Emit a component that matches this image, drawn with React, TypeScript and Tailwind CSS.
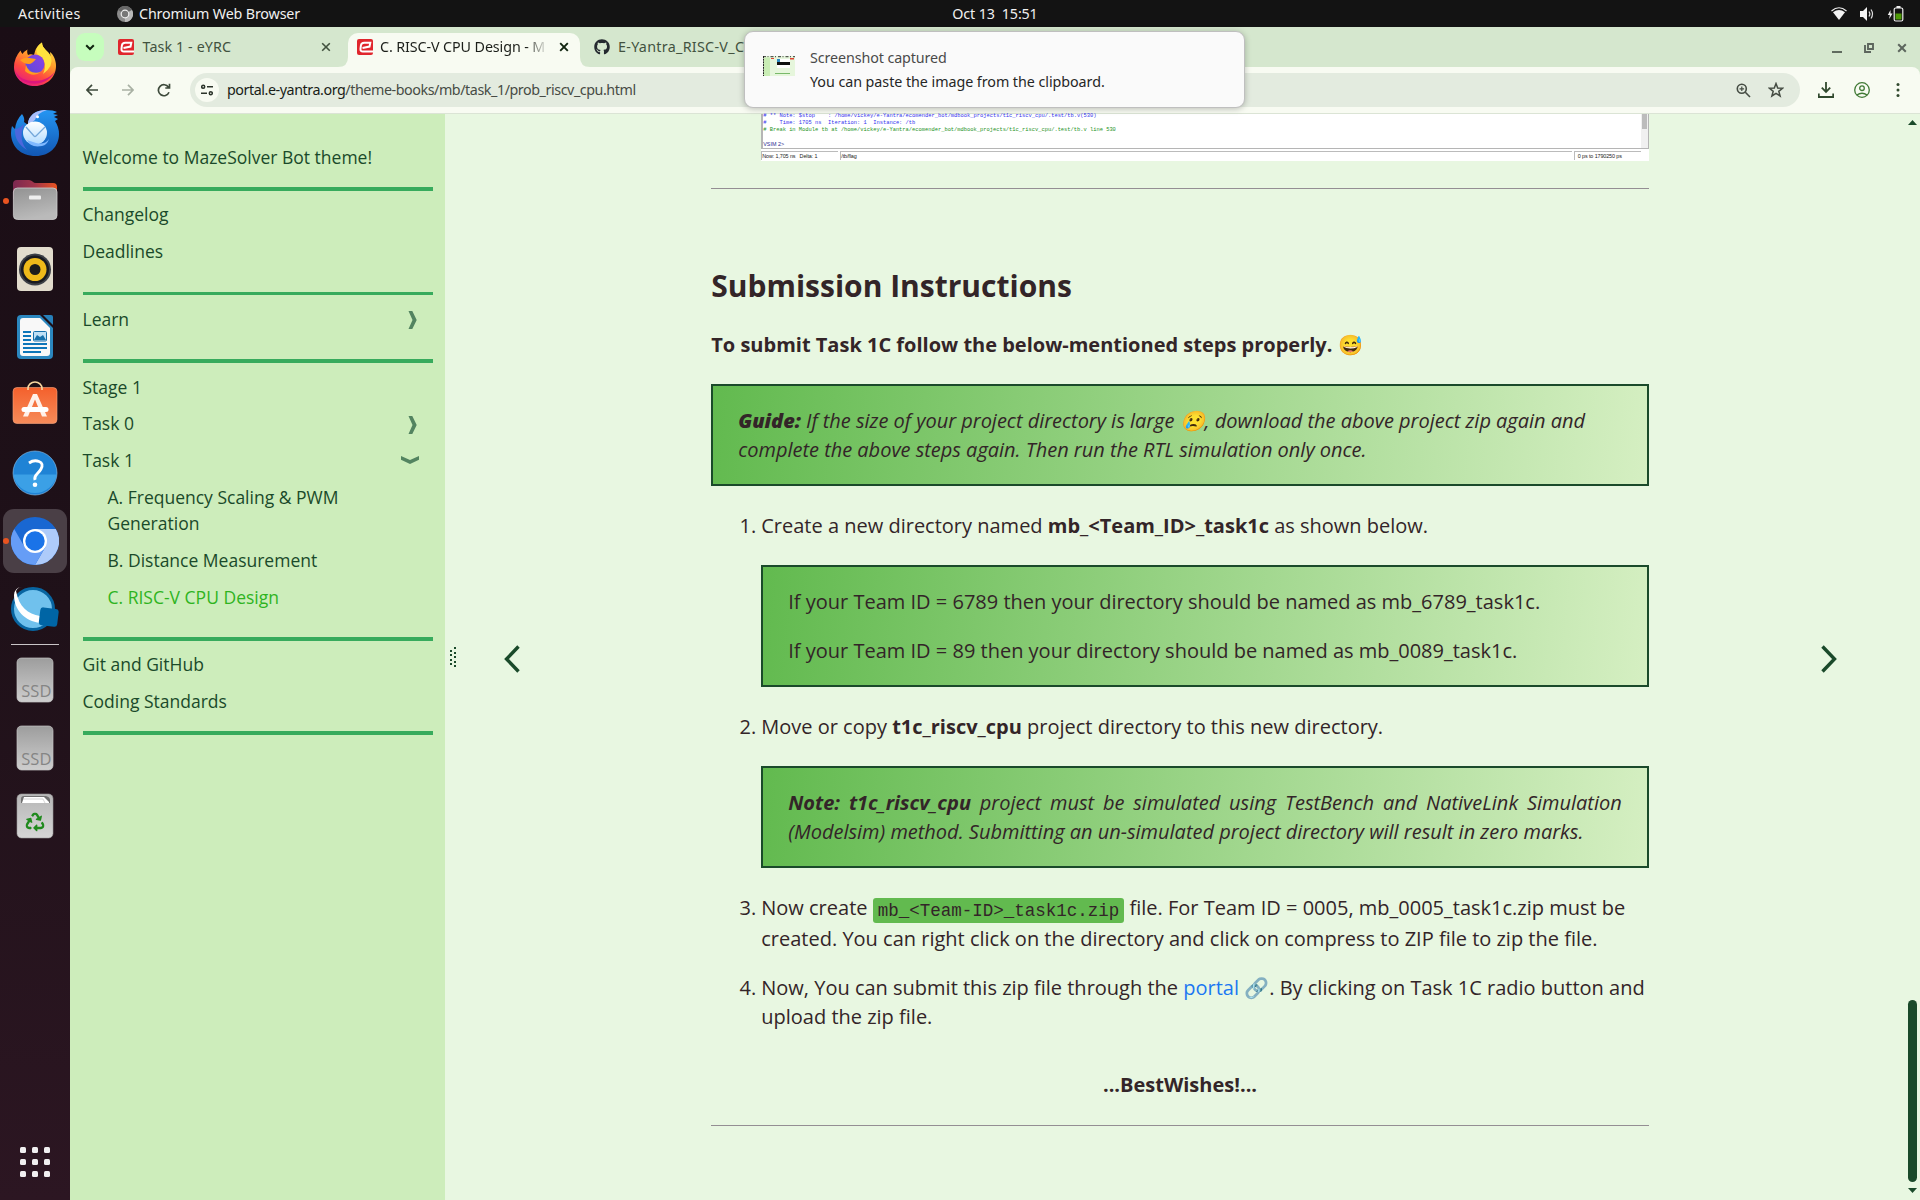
import React from "react";
import { FaGithub, FaRecycle } from "react-icons/fa";

const UI = "font-['Noto_Sans',sans-serif]";

function TopBar() {
  return (
    <header className={`grid h-[27px] w-full grid-cols-[1fr_auto_1fr] items-center bg-[#131313] text-[14.3px] leading-[27px] text-[#f0f0f0] ${UI}`}>
      <div className="flex items-center pl-[18px]">
        <span className="w-[99px] tracking-[0.3px]">Activities</span>
        <svg className="mr-[6px] h-4 w-4" viewBox="0 0 16 16">
          <circle cx="8" cy="8" r="8" fill="#8b8b8b" />
          <path d="M8 8L1 4A8 8 0 0 1 15 4Z" fill="#666" />
          <path d="M8 8L15 4A8 8 0 0 1 8 16Z" fill="#b8b8b8" />
          <circle cx="8" cy="8" r="4.4" fill="#eee" />
          <circle cx="8" cy="8" r="3.2" fill="#777" />
        </svg>
        <span className="tracking-[-0.15px]">Chromium Web Browser</span>
      </div>
      <div className="pl-[70px] whitespace-pre tracking-[-0.15px]">Oct 13  15:51</div>
      <div className="flex items-center justify-end pr-[16px]">
        <svg className="mr-[12px] h-[16px] w-[16px]" viewBox="0 0 16 16">
          <path d="M.5 5Q8 -1.5 15.500 5" fill="none" stroke="#eee" strokeWidth="1.200" />
          <path d="M2 6.200Q8 1.600 14 6.200L8 14Z" fill="#f2f2f2" />
        </svg>
        <svg className="mr-[12px] h-[16px] w-[16px]" viewBox="0 0 16 16">
          <path d="M1 5h3l4-4v14l-4-4H1z" fill="#f2f2f2" />
          <path d="M10 5.500q1.800 2.500 0 5M12 3.500q3 4.500 0 9" fill="none" stroke="#ddd" strokeWidth="1.200" />
        </svg>
        <svg className="h-[16px] w-[17px]" viewBox="0 0 17 16">
          <path d="M3.500 4L.8 9h2l-.6 4L5.500 7.500h-2z" fill="#f2f2f2" />
          <rect x="7.200" y="2" width="8.600" height="13" rx="1.500" fill="#131313" stroke="#eee" strokeWidth="1.200" />
          <rect x="9.500" y="0" width="4" height="2" fill="#eee" />
          <rect x="8.500" y="7.500" width="6" height="6" fill="#4e9a06" />
        </svg>
      </div>
    </header>
  );
}

function DockItem({ children, active, dot }: { children: React.ReactNode; active?: boolean; dot?: boolean }) {
  return (
    <div className="relative flex h-[68px] w-[70px] items-center justify-center">
      {active && <div className="absolute inset-x-[3px] inset-y-[2px] rounded-[11px] bg-[#4a3f46]" />}
      {dot && <div className="absolute top-[31px] left-[3px] h-[6px] w-[6px] rounded-full bg-[#e95420]" />}
      <svg className="relative h-12 w-12" viewBox="0 0 48 48">{children}</svg>
    </div>
  );
}

function Disk() {
  return (
    <>
      <rect x="6" y="2" width="36" height="44" rx="4.500" fill="url(#disk)" stroke="#c4c4c4" strokeWidth=".7" />
      <text x="10.300" y="40.800" fontSize="16.500" fill="#858585" fontFamily="Open Sans, sans-serif">SSD</text>
    </>
  );
}

function Dock() {
  return (
    <nav className="flex w-[70px] shrink-0 flex-col bg-gradient-to-b from-[#1a0d15] via-[#1f1119] to-[#2c1622] pt-[4px]">
      <DockItem>
        <defs>
          <linearGradient id="ff" x1="0.800" y1="0" x2="0.300" y2="1"><stop offset="0" stopColor="#fff14a" /><stop offset=".4" stopColor="#ff9a2a" /><stop offset=".7" stopColor="#ff4a40" /><stop offset="1" stopColor="#e51c80" /></linearGradient>
          <linearGradient id="ffc" x1="0" y1="1" x2="1" y2="0"><stop offset="0" stopColor="#5a4ad8" /><stop offset="1" stopColor="#8d40e6" /></linearGradient>
          <linearGradient id="tb" x1="0.500" y1="0" x2="0.500" y2="1"><stop offset="0" stopColor="#2496f3" /><stop offset="1" stopColor="#1257b4" /></linearGradient>
          <linearGradient id="env" x1="0" y1="0" x2="0" y2="1"><stop offset="0" stopColor="#fff" /><stop offset="1" stopColor="#b3dcff" /></linearGradient>
          <linearGradient id="fold" x1="0" y1="0" x2="1" y2="0"><stop offset="0" stopColor="#7b2850" /><stop offset=".5" stopColor="#a2354b" /><stop offset="1" stopColor="#e95420" /></linearGradient>
          <linearGradient id="foldf" x1="0" y1="0" x2="0.300" y2="1"><stop offset="0" stopColor="#929292" /><stop offset="1" stopColor="#bababa" /></linearGradient>
          <linearGradient id="disk" x1="0" y1="0" x2="0" y2="1"><stop offset="0" stopColor="#9d9d9d" /><stop offset="1" stopColor="#cecece" /></linearGradient>
          <linearGradient id="trash" x1="0" y1="0" x2="0" y2="1"><stop offset="0" stopColor="#b6b6b6" /><stop offset="1" stopColor="#d6d6d6" /></linearGradient>
          <linearGradient id="bag" x1="0" y1="0" x2="0" y2="1"><stop offset="0" stopColor="#f4602c" /><stop offset="1" stopColor="#f68c5a" /></linearGradient>
        </defs>
        <path d="M31 1.500C24 6 24 11 23 14C20 13 19 13 17 14C16 12 16 10 16.500 8.500Q13 10.500 11.500 13Q10 11 9.500 9.500Q3 17 3 26C3 37 12 45 24 45C36 45 45 36 45 25C45 20 43 14 39 11Q39 14 40 16C38 10 31 8 31 1.500Z" fill="url(#ff)" />
        <path d="M31 1.500C24 6 25 11 27 14C34 17 36 25 32 33Q43 25 40 16C38 10 31 8 31 1.500Z" fill="#ffe23e" />
        <circle cx="24" cy="23" r="9.500" fill="url(#ffc)" />
        <path d="M9 19Q14 16 18 17L25 18Q21 23 18 23Q13 23 9 19ZM15 24Q18 34 30 31Q22 37 14 30Z" fill="#ff9d1e" />
        <path d="M4 29C7 47 40 48 45 27C42 42 10 46 4 29Z" fill="#dc177c" />
      </DockItem>
      <DockItem>
        <path d="M17 16C17 5 27 1 34 1Q43 1 46 3L42 5L47 6L43 8L47 10L44 12Q48 18 48 25C48 38 38 47 25 47C9 47 0 37 0 24Q0 20 1 17L4 20Q5 11 11 5Q14 9 13 13L17 16Z" fill="url(#tb)" />
        <path d="M17 13C20 3 28 1 36 1Q26 4 24 11L17 16Z" fill="#a9bdfa" />
        <path d="M4 20Q3 33 16 41Q7 31 13 15Q8 20 4 20Z" fill="#4b67dc" />
        <ellipse cx="24" cy="24" rx="12" ry="11.500" fill="url(#env)" />
        <path d="M15 18L23 27Q24 28 25 27L34 18" fill="none" stroke="#74a7da" strokeWidth="1.300" />
        <path d="M16 31Q19 39 31 37Q36 36 38 30Q34 36 25 34Z" fill="#80b9ff" />
        <circle cx="26.500" cy="7.800" r="1.500" fill="#fff" />
      </DockItem>
      <DockItem dot>
        <path d="M2 10V7q0-4 4-4h12q2 0 3.500 1.500t3.500 1.500h17q4 0 4 4v12H2z" fill="url(#fold)" />
        <rect x="2.400" y="11" width="43.600" height="31.500" rx="4" fill="url(#foldf)" stroke="#cfcfcf" strokeWidth=".8" />
        <rect x="18" y="18.500" width="12" height="4" rx="1" fill="#eee" />
      </DockItem>
      <DockItem>
        <rect x="6" y="2" width="36" height="44" rx="4" fill="#e2dccd" />
        <circle cx="24" cy="24.500" r="16" fill="#3d4047" />
        <circle cx="24" cy="24.500" r="14" fill="#191a20" />
        <circle cx="24" cy="24.500" r="11.500" fill="#eeb91a" />
        <circle cx="24" cy="24.500" r="5.500" fill="#1c1c1c" />
      </DockItem>
      <DockItem>
        <path d="M10 2h19l13 13v27q0 4-4 4H10q-4 0-4-4V6q0-4 4-4z" fill="#2b87bf" />
        <path d="M12 5h17l10 10v25q0 3-3 3H12q-3 0-3-3V8q0-3 3-3z" fill="#f8f8f8" />
        <path d="M32 2h8q2 0 2 2v8z" fill="#2680ba" />
        <path d="M12 19h8M12 23h8M12 27h8M12 31h24M12 35h24M12 39h18" stroke="#0e76b9" strokeWidth="1.800" />
        <rect x="22.500" y="18.500" width="13" height="9.500" rx="1" fill="#bfe0f6" stroke="#1670ab" />
        <path d="M23 27l3-5 3 2 3-2 3 5z" fill="#1670ab" />
      </DockItem>
      <DockItem>
        <rect x="2" y="6.500" width="44" height="36" rx="4" fill="url(#bag)" stroke="#f9a47c" strokeWidth=".6" />
        <path d="M17 9V7.500a7 6.500 0 0 1 14 0V9" fill="none" stroke="#f9d7a0" strokeWidth="1.600" />
        <path d="M22 13h4l10 22.500h-5L24 18.500L17 35.500h-5z" fill="#fff1ea" />
        <rect x="10.500" y="26" width="27" height="5" rx="2.500" fill="#fff" />
      </DockItem>
      <DockItem>
        <circle cx="24" cy="24" r="22" fill="#1f83d5" stroke="#8ec6f2" strokeWidth=".6" />
        <path d="M2.300 25.500h43.400a22 22 0 0 1-43.400 0z" fill="#3ba0e6" />
        <path d="M18 14Q23 10.500 28 12.500T30 20Q29 22 26 25T24 31" fill="none" stroke="#fff" strokeWidth="2.800" />
        <circle cx="24" cy="35.800" r="2.300" fill="#fff" />
      </DockItem>
      <DockItem active dot>
        <circle cx="24" cy="24" r="24" fill="#1967d2" />
        <path d="M24 12H44.800A24 24 0 0 1 24 48L34.400 30Z" fill="#aecbfa" />
        <path d="M3.200 12L13.600 30L24 36L34.400 30L24 48A24 24 0 0 1 3.200 12Z" fill="#669df6" />
        <circle cx="24" cy="24" r="12" fill="#fff" />
        <circle cx="24" cy="24" r="9.700" fill="#1a73e8" />
      </DockItem>
      <DockItem>
        <circle cx="22" cy="24" r="20.500" fill="#70c1ed" stroke="#0865a1" strokeWidth="3" />
        <path d="M5 6C8 22 17 29 29 31V38C14 36 3 25 3 10Q4 2 11 2Q7 2 5 6Z" fill="#fff" />
        <rect x="28.500" y="23" width="18.500" height="18" rx="3" fill="#0065a5" transform="rotate(7 37 32)" />
      </DockItem>
      <div className="mx-auto my-px h-px w-12 bg-[#c9c5c7]" />
      <DockItem><Disk /></DockItem>
      <DockItem><Disk /></DockItem>
      <DockItem>
        <rect x="6" y="2" width="36" height="44" rx="4.500" fill="url(#trash)" stroke="#9a9a9a" strokeWidth=".6" />
        <path d="M10 11V7q0-3 3-3h22q4 1 4 4v3z" fill="#717171" />
        <path d="M11 11l2-6h20l5 5v1z" fill="#fff" />
        <path d="M12 7l20 0 2 4" stroke="#bbb" fill="none" strokeWidth=".6" />
        <g transform="translate(14.500 20.500)"><FaRecycle size={19} color="#208a1e" /></g>
      </DockItem>
      <div className="mt-auto mb-[23px] grid grid-cols-3 gap-[6px] self-center">
        {Array.from({ length: 9 }, (_, i) => <div key={i} className="h-[6px] w-[6px] rounded-[1.500px] bg-[#f1eff0]" />)}
      </div>
    </nav>
  );
}

function Favicon() {
  return (
    <svg className="h-4 w-4 shrink-0" viewBox="0 0 16 16">
      <rect width="16" height="16" rx="2" fill="#e0262d" />
      <path d="M16 12.600H6Q3.200 12.600 3.500 9.800L3.900 6.500Q4.300 3.700 7.200 3.700H13.300L12.500 7.600L5.500 9" fill="none" stroke="#fff" strokeWidth="2" />
    </svg>
  );
}

function Cross({ color, width = "1.600" }: { color: string; width?: string }) {
  return (
    <svg className="h-[10px] w-[10px] shrink-0" viewBox="0 0 10 10">
      <path d="M1.200 1.200l7.600 7.600M8.800 1.200L1.200 8.800" stroke={color} strokeWidth={width} />
    </svg>
  );
}

function TabStrip() {
  return (
    <div className={`flex h-[40px] items-end bg-[#d5e7ce] pl-[6px] text-[14.3px] text-[#42523f] ${UI}`}>
      <div className="mb-[6px] flex h-7 w-7 items-center justify-center rounded-[9px] bg-[#c6fdbd]">
        <svg className="h-[10px] w-[10px]" viewBox="0 0 10 10"><path d="M1.200 3.200L5 7l3.800-3.800" fill="none" stroke="#10240f" strokeWidth="2" /></svg>
      </div>
      <div className="flex h-[34px] w-[244px] items-center pb-[6px] pl-[14px]">
        <Favicon />
        <span className="ml-[8.500px] flex-1 tracking-[0.1px]">Task 1 - eYRC</span>
        <span className="mr-[17px]"><Cross color="#42523f" /></span>
      </div>
      <div className="relative flex h-[34px] w-[232px] items-center rounded-t-[10px] bg-[#f8fbf2] pb-[6px] pl-[9px] text-[#1c1f1a]">
        <svg className="absolute bottom-0 left-[-10px] h-[10px] w-[10px]" viewBox="0 0 10 10"><path d="M0 10Q10 10 10 0V10Z" fill="#f8fbf2" /></svg>
        <svg className="absolute right-[-10px] bottom-0 h-[10px] w-[10px]" viewBox="0 0 10 10"><path d="M10 10Q0 10 0 0V10Z" fill="#f8fbf2" /></svg>
        <Favicon />
        <span className="ml-[7px] w-[168px] overflow-hidden tracking-[-0.1px] whitespace-nowrap [mask-image:linear-gradient(to_right,black_146px,transparent_168px)]">C. RISC-V CPU Design - M</span>
        <span className="ml-[11px] flex"><Cross color="#10240f" width="1.900" /></span>
      </div>
      <div className="flex h-[34px] items-center pb-[6px] pl-[14px]">
        <FaGithub size={16} color="#24292f" />
        <span className="ml-[8px] tracking-[0.3px] whitespace-nowrap">E-Yantra_RISC-V_C</span>
      </div>
      <div className="mb-[14px] ml-auto flex items-end pr-[13px]">
        <div className="mr-[22px] h-[2px] w-[10px] bg-[#606b5f]" />
        <svg className="mr-[23px] h-[10px] w-[10px]" viewBox="0 0 10 10"><path d="M4 1h5v5H4zM1 2v7h6" fill="none" stroke="#5d665e" strokeWidth="1.900" /></svg>
        <Cross color="#5d665e" width="2" />
      </div>
    </div>
  );
}

function Toolbar() {
  return (
    <div className="bg-[#d5e7ce]">
      <div className={`flex h-[47px] items-center rounded-t-[8px] border-b border-[#dbe4d5] bg-[#f8fbf2] pl-[16px] text-[14.3px] ${UI}`}>
        <svg className="h-[12px] w-[12px]" viewBox="0 0 12 12"><path d="M12 6H1.200M6 .8L.9 6L6 11.200" fill="none" stroke="#3d4a3b" strokeWidth="1.700" /></svg>
        <svg className="ml-[24px] h-[12px] w-[12px]" viewBox="0 0 12 12"><path d="M0 6h10.800M6 .8L11.100 6L6 11.200" fill="none" stroke="#a9b1a4" strokeWidth="1.700" /></svg>
        <svg className="ml-[23px] h-[14px] w-[14px]" viewBox="0 0 14 14"><path d="M12 9.300A5.500 5.500 0 1 1 11.500 4.200M12.500 .8V5H8.300" fill="none" stroke="#3d4a3b" strokeWidth="1.700" /></svg>
        <div className="ml-[19px] flex h-[34px] w-[1610px] items-center rounded-full bg-[#e3ebdf] pr-[16px] pl-[5px] text-[#474b45]">
          <div className="mr-[8px] flex h-6 w-6 items-center justify-center rounded-full bg-[#f8fbf2]">
            <svg className="h-3 w-3" viewBox="0 0 12 12" fill="none" stroke="#2c342b" strokeWidth="1.500"><circle cx="2.200" cy="2.800" r="1.500" /><path d="M6 2.800h6M0 9.200h6" /><circle cx="9.800" cy="9.200" r="1.500" /></svg>
          </div>
          <span className="tracking-[-0.44px]"><span className="text-[#191d18]">portal.e-yantra.org</span>/theme-books/mb/task_1/prob_riscv_cpu.html</span>
          <svg className="mr-[17px] ml-auto h-[15px] w-[15px]" viewBox="0 0 15 15" fill="none" stroke="#454c43" strokeWidth="1.600"><circle cx="5.800" cy="5.800" r="4.500" /><path d="M9.300 9.300L14 14" /><path d="M3.500 5.800h4.600M5.800 3.500v4.600" strokeWidth="1.200" /></svg>
          <svg className="h-4 w-4" viewBox="0 0 16 16"><path d="M8 1.600L9.700 6.100L14.500 6.300L10.800 9.300L12.100 14L8 11.400L3.900 14L5.200 9.300L1.500 6.300L6.300 6.100Z" fill="none" stroke="#454c43" strokeWidth="1.500" /></svg>
        </div>
        <svg className="ml-[18px] h-4 w-4" viewBox="0 0 16 16"><path d="M8 0v9.500M3.800 5.700L8 10l4.200-4.300M.8 11.500V15h14.400v-3.500" fill="none" stroke="#31492e" strokeWidth="1.800" /></svg>
        <svg className="ml-[20px] h-4 w-4" viewBox="0 0 16 16" fill="none" stroke="#417a36" strokeWidth="1.300"><circle cx="8" cy="8" r="7.300" /><circle cx="8" cy="6.200" r="2.300" /><path d="M2.800 13Q8 9.500 13.200 13" /></svg>
        <svg className="ml-[26px] h-[14px] w-[4px]" viewBox="0 0 4 14" fill="#31492e"><circle cx="2" cy="1.600" r="1.500" /><circle cx="2" cy="7" r="1.500" /><circle cx="2" cy="12.400" r="1.500" /></svg>
      </div>
    </div>
  );
}

function Chevron({ open }: { open?: boolean }) {
  return open ? (
    <svg className="mr-[14px] ml-auto h-[8px] w-[18px] self-center" viewBox="0 0 18 8"><path d="M0 0L9 4L18 0V3.800L9 8L0 3.800Z" fill="#538460" /></svg>
  ) : (
    <svg className="mt-[3px] mr-[16px] ml-auto h-[18px] w-[9px] self-center" viewBox="0 0 9 18"><path d="M.5 0H4.300L8.700 9L4.300 18H.5L4.500 9Z" fill="#538460" /></svg>
  );
}

function Item({ children, className = "" }: { children: React.ReactNode; className?: string }) {
  return <div className={`mt-[10.500px] flex ${className}`}>{children}</div>;
}

function Sidebar() {
  return (
    <aside className="w-[375px] shrink-0 bg-[#cdedbb] pt-[19px] pr-[12px] pl-[12.500px] text-[17.500px] leading-[26.250px] text-[#1a4a2a]">
      <Item>Welcome to MazeSolver Bot theme!</Item>
      <div className="mt-[17px] h-[4px] bg-[#37ab5c]" />
      <Item>Changelog</Item>
      <Item>Deadlines</Item>
      <div className="mt-[27.500px] mb-[11px] h-[3px] bg-[#37ab5c]" />
      <div className="flex">Learn<Chevron /></div>
      <div className="mt-[27.200px] h-[4px] bg-[#37ab5c]" />
      <Item>Stage 1</Item>
      <Item>Task 0<Chevron /></Item>
      <Item>Task 1<Chevron open /></Item>
      <Item className="pr-[60px] pl-[25px]">A. Frequency Scaling &amp; PWM Generation</Item>
      <Item className="pl-[25px]">B. Distance Measurement</Item>
      <Item className="pl-[25px] text-[#2fb41f]">C. RISC-V CPU Design</Item>
      <div className="mt-[27px] h-[4px] bg-[#37ab5c]" />
      <Item>Git and GitHub</Item>
      <Item>Coding Standards</Item>
      <div className="mt-[16.500px] h-[4px] bg-[#37ab5c]" />
    </aside>
  );
}

function Box({ children, className = "" }: { children: React.ReactNode; className?: string }) {
  return (
    <div className={`border-2 border-[#1a4a2a] bg-[linear-gradient(95deg,#62ba4f,#d5efc2)] px-[25px] py-[20px] ${className}`}>
      {children}
    </div>
  );
}

function Step({ n, children, className = "" }: { n: number; children: React.ReactNode; className?: string }) {
  return (
    <li className={`flex ${className}`}>
      <span className="w-[50px] shrink-0 pr-[5px] text-right">{n}.</span>
      <div className="min-w-0 flex-1">{children}</div>
    </li>
  );
}

function Terminal() {
  return (
    <div className="ml-[50px] flex h-[47px] flex-col bg-white font-['Liberation_Mono',monospace] text-[5.400px] leading-[7px]">
      <div className="flex h-[35px] border-b border-l-2 border-[#b5b5b5] whitespace-pre">
        <div className="flex-1 text-[#3333ee]">
          <div className="-mt-[1px]"># ** Note: $stop    : /home/vickey/e-Yantra/ecomender_bot/mdbook_projects/t1c_riscv_cpu/.test/tb.v(530)</div>
          <div>#    Time: 1705 ns  Iteration: 1  Instance: /tb</div>
          <div className="text-[#1d921d]"># Break in Module tb at /home/vickey/e-Yantra/ecomender_bot/mdbook_projects/t1c_riscv_cpu/.test/tb.v line 530</div>
          <div className="mt-[7px] font-['Liberation_Sans',sans-serif] text-[#2a2a90]">VSIM 2&gt;</div>
        </div>
        <div className="w-[8px] border-r border-[#b5b5b5] bg-[#f0f0f0]"><div className="ml-px h-[15px] w-[5px] bg-[#bcbcbc]" /></div>
      </div>
      <div className="mt-[2px] flex h-[9px] font-['Liberation_Sans',sans-serif] leading-[9px] tracking-[-0.1px] text-[#222]">
        <div className="w-[77px] border-t border-l border-[#bbb] whitespace-pre">Now: 1,705 ns   Delta: 1</div>
        <div className="ml-[2px] flex-1 border-t border-l border-[#bbb]">/tb/flag</div>
        <div className="mr-[8px] ml-[2px] w-[67px] border-t border-l border-[#bbb] pl-[3px]">0 ps to 1790250 ps</div>
      </div>
    </div>
  );
}

function Arrow({ right }: { right?: boolean }) {
  return (
    <svg className="h-[28px] w-[18px]" viewBox="0 0 18 28">
      <path d={right ? "M2.500 1.500L14.500 14L2.500 26.500" : "M15.500 1.500L3.500 14L15.500 26.500"} fill="none" stroke="#1a4a2a" strokeWidth="3.400" />
    </svg>
  );
}

function Chapter() {
  return (
    <main className="w-[937.500px] shrink-0 text-[20px] leading-[29px] text-[#332528]">
      <Terminal />
      <div className="mt-[27px] h-px bg-[#948e93]" />
      <h2 className="mt-[75px] text-[30px] leading-[44px] font-bold">Submission Instructions</h2>
      <p className="mt-[22px] font-bold">To submit Task 1C follow the below-mentioned steps properly. 😅</p>
      <Box className="mt-[25px] tracking-[-0.02px] italic">
        <b className="font-extrabold">Guide:</b> If the size of your project directory is large 😢, download the above project zip again and complete the above steps again. Then run the RTL simulation only once.
      </Box>
      <ol>
        <Step n={1} className="mt-[25px]">
          Create a new directory named <b>mb_&lt;Team_ID&gt;_task1c</b> as shown below.
          <Box className="mt-[25px]">
            <p>If your Team ID = 6789 then your directory should be named as mb_6789_task1c.</p>
            <p className="mt-[20px]">If your Team ID = 89 then your directory should be named as mb_0089_task1c.</p>
          </Box>
        </Step>
        <Step n={2} className="mt-[25px]">
          Move or copy <b>t1c_riscv_cpu</b> project directory to this new directory.
          <Box className="mt-[25px] text-justify tracking-[-0.01px] italic">
            <b>Note: t1c_riscv_cpu</b> project must be simulated using TestBench and NativeLink Simulation (Modelsim) method. Submitting an un-simulated project directory will result in zero marks.
          </Box>
        </Step>
        <Step n={3} className="mt-[25px]">
          <p className="h-[31px]">Now create <code className="rounded-[3px] bg-[#62ba4f] px-[5px] pt-[3px] pb-[2px] align-[-1px] font-['Liberation_Mono',monospace] text-[17.500px] leading-none">mb_&lt;Team-ID&gt;_task1c.zip</code> file. For Team ID = 0005, mb_0005_task1c.zip must be</p>
          <p>created. You can right click on the directory and click on compress to ZIP file to zip the file.</p>
        </Step>
        <Step n={4} className="mt-[20px]">
          Now, You can submit this zip file through the <span className="text-[#1b77f2]">portal</span> 🔗. By clicking on Task 1C radio button and upload the zip file.
        </Step>
      </ol>
      <p className="mt-[39px] text-center font-bold">...BestWishes!...</p>
      <div className="mt-[26px] h-px bg-[#948e93]" />
    </main>
  );
}

function Notification() {
  return (
    <div className={`absolute top-[31px] left-[744px] flex h-[77px] w-[501px] rounded-[9px] border border-[#bfbfbf] bg-[#fafafa] pl-[18px] text-[14.3px] shadow-[0_1px_6px_rgba(0,0,0,0.25)] ${UI}`}>
      <svg className="mt-[24px] h-5 w-8" viewBox="0 0 32 20">
        <rect width="32" height="20" fill="#e6f6dc" />
        <path d="M0 .7h32" stroke="#333" strokeWidth="1" strokeDasharray="3 1.500 1 2" />
        <path d="M.5 0v20" stroke="#222" strokeDasharray="2 .7" />
        <rect x="1" y="1.500" width="6" height="18.500" fill="#c9edb5" />
        <rect x="14" y="3" width="13" height="9" fill="#fff" /><rect x="14" y="6" width="13" height="3" fill="#111" />
        <path d="M14 3h3v3h-3z" fill="#2f8dc4" /><path d="M8 2h3v1H8zM27 2h4v1.500h-4z" fill="#d43" />
        <path d="M12 17.500h15" stroke="#79b96a" />
      </svg>
      <div className="ml-[15px] pt-[14px] leading-[24px]">
        <div className="tracking-[-0.1px] text-[#4a4a4a]">Screenshot captured</div>
        <div className="tracking-[-0.05px] text-[#262626]">You can paste the image from the clipboard.</div>
      </div>
    </div>
  );
}

export default function App() {
  return (
    <div className="relative flex h-[1200px] w-[1920px] flex-col overflow-hidden font-['Open_Sans',sans-serif]">
      <TopBar />
      <div className="flex min-h-0 flex-1">
        <Dock />
        <div className="flex min-w-0 flex-1 flex-col">
          <TabStrip />
          <Toolbar />
          <div className="flex min-h-0 flex-1 bg-[#e8f7e1]">
            <Sidebar />
            <div className="mt-[533px] ml-[5px] flex gap-[2px]">
              <div className="mt-[3px] h-[16px] w-[2px] bg-[repeating-linear-gradient(#1a4a2a_0_2px,transparent_2px_4.500px)]" />
              <div className="h-[20px] w-[2px] bg-[repeating-linear-gradient(#1a4a2a_0_2px,transparent_2px_4.500px)]" />
            </div>
            <div className="mt-[531px] ml-[46.500px] w-[208.750px]"><Arrow /></div>
            <Chapter />
            <div className="mt-[531px] ml-[171px]"><Arrow right /></div>
            <div className="ml-auto flex w-[12px] flex-col pt-[6px] pb-[7px]">
              <svg className="h-[5px] w-[9px]" viewBox="0 0 9 5"><path d="M0 5L4.500 0L9 5Z" fill="#1a4a2a" /></svg>
              <div className="mt-auto mb-[6px] h-[182px] w-[9px] rounded-full bg-[#1a4a2a]" />
              <svg className="h-[5px] w-[9px]" viewBox="0 0 9 5"><path d="M0 0L4.500 5L9 0Z" fill="#1a4a2a" /></svg>
            </div>
          </div>
        </div>
      </div>
      <Notification />
    </div>
  );
}
